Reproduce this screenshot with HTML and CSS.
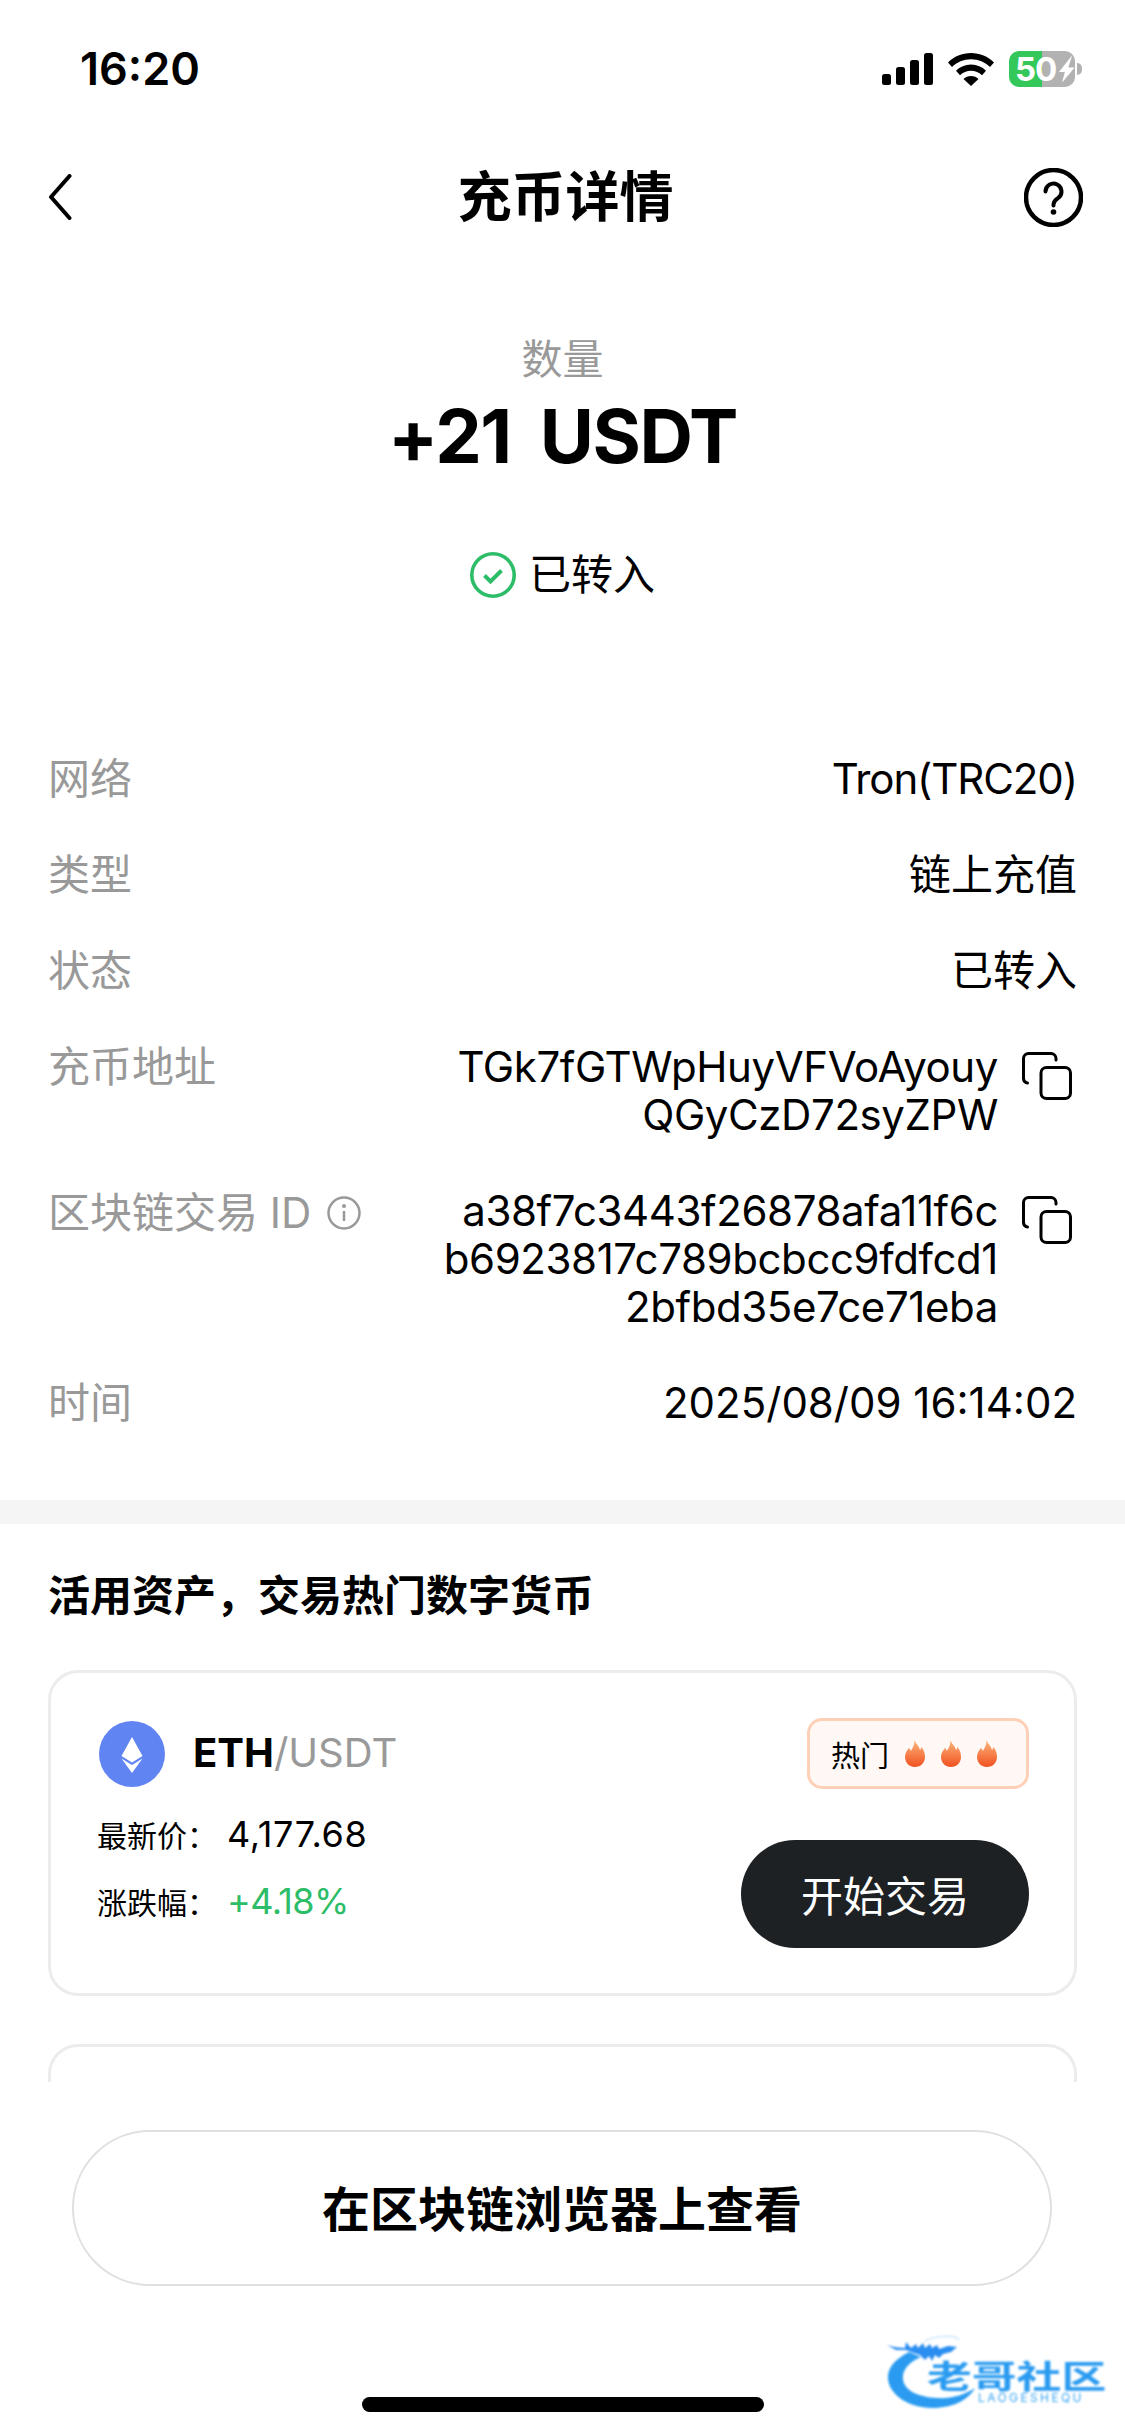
FILE: index.html
```html
<!DOCTYPE html>
<html lang="zh-CN">
<head>
    <meta charset="UTF-8">
    <meta name="viewport" content="width=device-width, initial-scale=1.0">
    <title>充币详情</title>
    <link rel="stylesheet" href="styles.css">
</head>
<body>
<svg class="defs" width="0" height="0">
    <defs>
        <linearGradient id="flameFill" x1="0" y1="0" x2="0" y2="1">
            <stop offset="0" stop-color="#fdb57c"/>
            <stop offset="1" stop-color="#f0511f"/>
        </linearGradient>
        <symbol id="flame" viewBox="0 0 20 27">
            <path d="M9.500 0C10.500 4 14 5.500 15 10c.8-.8 1.200-1.800 1.300-3C18.700 9.500 20 13 20 17c0 6-4.500 10-10 10S0 23 0 17c0-4 2-6.500 4-9 1 1 1.500 1.800 1.800 3C7.800 8 9.800 4.500 9.500 0z" fill="url(#flameFill)"/>
        </symbol>
        <symbol id="copy" viewBox="0 0 50 48">
            <path d="M34 8V6.500A5 5 0 0 0 29 1.500H6.500a5 5 0 0 0-5 5V26a5 5 0 0 0 4 5" fill="none" stroke="#000" stroke-width="3" stroke-linecap="round"/>
            <rect x="19" y="15.500" width="29.500" height="31" rx="5.500" fill="none" stroke="#000" stroke-width="3"/>
        </symbol>
    </defs>
</svg>

<div class="page">
    <div class="scroll">
        <div class="statusbar">
            <span class="time">16:20</span>
            <div class="status-icons">
                <svg width="51" height="32" viewBox="0 0 51 32">
                    <rect x="0" y="21" width="9" height="11" rx="2.500"/>
                    <rect x="14" y="14" width="9" height="18" rx="2.500"/>
                    <rect x="28" y="7" width="9" height="25" rx="2.500"/>
                    <rect x="42" y="0" width="9" height="32" rx="2.500"/>
                </svg>
                <svg width="46" height="33" viewBox="0 0 46 33">
                    <path d="M23 0C14 0 6 3.500 0 9.500l4 4.500C9 9 15.500 6.200 23 6.200S37 9 42 14l4-4.500C40 3.500 32 0 23 0z"/>
                    <path d="M23 11.500c-6 0-11 2.300-15 6.200l4 4.500c3-2.800 6.800-4.500 11-4.500s8 1.700 11 4.500l4-4.500c-4-3.900-9-6.200-15-6.200z"/>
                    <path d="M23 23c-3 0-5.500 1.100-7.500 3L23 33l7.500-7c-2-1.900-4.500-3-7.500-3z"/>
                </svg>
                <div class="battery">
                    <span class="battery-num">50</span>
                    <svg width="16" height="28" viewBox="0 0 16 28">
                        <path d="M13.500 0L0 17h6L3 28l13-15.500H9.500z" fill="#fff"/>
                    </svg>
                </div>
            </div>
        </div>

        <div class="nav">
            <svg class="nav-back" width="24" height="46" viewBox="0 0 24 46">
                <path d="M21.500 2L3 23l18.500 21" fill="none" stroke="#000" stroke-width="4" stroke-linecap="round" stroke-linejoin="round"/>
            </svg>
            <h1 class="nav-title">充币详情</h1>
            <svg class="nav-help" width="59" height="59" viewBox="0 0 59 59">
                <circle cx="29.500" cy="29.500" r="27.500" fill="none" stroke="#000" stroke-width="4.500"/>
                <path d="M21.500 23.500a8 8 0 1 1 12.500 6.600c-2.800 1.900-4.500 3.400-4.500 6.400v1" fill="none" stroke="#000" stroke-width="4" stroke-linecap="round"/>
                <circle cx="29.500" cy="44" r="2.800"/>
            </svg>
        </div>

        <div class="summary">
            <div class="summary-label">数量</div>
            <div class="summary-amount">+21 USDT</div>
            <div class="summary-status">
                <svg width="46" height="46" viewBox="0 0 46 46">
                    <circle cx="23" cy="23" r="21.200" fill="none" stroke="#2dbd68" stroke-width="3.600"/>
                    <path d="M14.500 23.500l6 6 11-11" fill="none" stroke="#2dbd68" stroke-width="4"/>
                </svg>
                <span>已转入</span>
            </div>
        </div>

        <div class="details">
            <div class="row">
                <div class="row-label">网络</div>
                <div class="row-value tight">Tron(TRC20)</div>
            </div>
            <div class="row">
                <div class="row-label">类型</div>
                <div class="row-value">链上充值</div>
            </div>
            <div class="row">
                <div class="row-label">状态</div>
                <div class="row-value">已转入</div>
            </div>
            <div class="row">
                <div class="row-label">充币地址</div>
                <div class="row-value with-copy">
                    <span>TGk7fGTWpHuyVFVoAyouy<br>QGyCzD72syZPW</span>
                    <svg class="copy-icon" width="50" height="48"><use href="#copy"/></svg>
                </div>
            </div>
            <div class="row">
                <div class="row-label row-label-id">区块链交易 ID
                    <svg class="info-icon" width="34" height="34" viewBox="0 0 34 34">
                        <circle cx="17" cy="17" r="15.500" fill="none" stroke="#999" stroke-width="2.500"/>
                        <circle cx="17" cy="10" r="2" fill="#999"/>
                        <path d="M17 15v10" stroke="#999" stroke-width="2.500"/>
                    </svg>
                </div>
                <div class="row-value with-copy">
                    <span>a38f7c3443f26878afa11f6c<br>b6923817c789bcbcc9fdfcd1<br>2bfbd35e7ce71eba</span>
                    <svg class="copy-icon" width="50" height="48"><use href="#copy"/></svg>
                </div>
            </div>
            <div class="row">
                <div class="row-label">时间</div>
                <div class="row-value">2025/08/09 16:14:02</div>
            </div>
        </div>

        <div class="band"></div>

        <div class="promo">
            <h2 class="promo-title">活用资产，交易热门数字货币</h2>

            <div class="card">
                <div class="card-left">
                    <div class="pair">
                        <svg width="66" height="66" viewBox="0 0 66 66">
                            <circle cx="33" cy="33" r="33" fill="#6184f3"/>
                            <path d="M33 16L22.500 35 33 41.500 43.500 35z" fill="#fff"/>
                            <path d="M22.500 37.500L33 44l10.500-6.500L33 52z" fill="#fff"/>
                        </svg>
                        <span class="pair-name"><b>ETH</b>/USDT</span>
                    </div>
                    <div class="stat stat-first">
                        <span class="stat-label">最新价：</span>
                        <span class="stat-value">4,177.68</span>
                    </div>
                    <div class="stat">
                        <span class="stat-label">涨跌幅：</span>
                        <span class="stat-value up">+4.18%</span>
                    </div>
                </div>
                <div class="card-right">
                    <div class="hot-tag">
                        <span>热门</span>
                        <svg width="20" height="27"><use href="#flame"/></svg>
                        <svg width="20" height="27"><use href="#flame"/></svg>
                        <svg width="20" height="27"><use href="#flame"/></svg>
                    </div>
                    <div class="trade-btn">开始交易</div>
                </div>
            </div>

            <div class="card"></div>
        </div>
    </div>

    <div class="footer">
        <div class="explorer-btn">在区块链浏览器上查看</div>
        <div class="home-bar"></div>
    </div>

    <div class="watermark">
        <svg class="watermark-dragon" width="120" height="75" viewBox="0 0 120 75">
            <path d="M22 17C8 24 0 33 1 44c1 15 20 29 44 29 18 0 35-6 43-20-11 7-24 11-38 10C32 62 17 56 16 44c-1-9 6-17 18-22z" fill="#2a9bf0"/>
            <path d="M0 10c6 2 12 3 18 3l1-6 5 6 5-4 2 4 5-5 2 5 5-4 2 4 5-3 2 4 9-3 9 1-6 5-8 2-4 4-4-3-3 6-3-5-4 4-5-5-6-2-8-3-10 0z" fill="#2a8df0"/>
            <path d="M38 6C50 0 68 0 72 5" fill="none" stroke="#d6eafb" stroke-width="2"/>
        </svg>
        <span class="watermark-name">老哥社区</span>
        <span class="watermark-sub">LAOGESHEQU</span>
    </div>
</div>
</body>
</html>
```

FILE: styles.css
```css
* {
  box-sizing: border-box;
}

html,
body {
  margin: 0;
  padding: 0;
  background-color: #fff;
}

body {
  font-family: Inter, "Noto Sans CJK SC", sans-serif;
  color: #000;
}

.defs {
  position: absolute;
}

.page {
  position: relative;
  display: flex;
  flex-direction: column;
  width: 1125px;
  height: 2436px;
  overflow: hidden;
}

.scroll {
  height: 2082px;
  overflow: hidden;
}

/* status bar */
.statusbar {
  display: flex;
  justify-content: space-between;
  align-items: center;
  height: 139px;
  padding: 0 50px 1px 80px;
}

.time {
  font-size: 45px;
  font-weight: 600;
  line-height: 46px;
}

.status-icons {
  display: flex;
  align-items: center;
  gap: 15px;
}

.battery {
  position: relative;
  display: flex;
  align-items: center;
  gap: 3px;
  width: 66px;
  height: 36px;
  padding-left: 6px;
  border-radius: 10px;
  background: linear-gradient(90deg, #34c759 50%, #b2b2b2 50%);
}

.battery::after {
  content: "";
  position: absolute;
  left: 68px;
  top: 12px;
  width: 5px;
  height: 12px;
  border-radius: 0 6px 6px 0;
  background-color: #b2b2b2;
}

.battery-num {
  font-size: 33px;
  font-weight: 700;
  line-height: 36px;
  letter-spacing: -1px;
  color: #fff;
}

/* nav */
.nav {
  display: grid;
  grid-template-columns: 1fr auto 1fr;
  align-items: center;
  height: 116px;
  padding: 0 42px 0 48px;
}

.nav-title {
  margin: 0;
  padding-bottom: 8px;
  font-size: 54px;
  font-weight: 700;
}

.nav-help {
  justify-self: end;
}

/* summary */
.summary {
  display: flex;
  flex-direction: column;
  align-items: center;
  padding-top: 76px;
}

.summary-label {
  font-size: 41px;
  line-height: 56px;
  color: #999;
}

.summary-amount {
  margin-top: 4px;
  font-size: 74px;
  font-weight: 700;
  line-height: 90px;
  letter-spacing: -1.5px;
  word-spacing: 13px;
}

.summary-status {
  display: flex;
  align-items: center;
  gap: 13px;
  margin-top: 70px;
  font-size: 42px;
  line-height: 48px;
}

/* detail rows */
.details {
  display: flex;
  flex-direction: column;
  gap: 48px;
  padding: 156px 48px 73px;
}

.row {
  display: flex;
  justify-content: space-between;
  font-size: 42px;
  line-height: 48px;
}

.row-label {
  display: flex;
  align-items: center;
  gap: 16px;
  height: 48px;
  color: #999;
}

.row-label-id {
  padding-top: 4px;
}

.row-value {
  text-align: right;
}

.tight {
  letter-spacing: -1.1px;
}

.with-copy {
  display: flex;
  gap: 24px;
  letter-spacing: -0.4px;
}

.copy-icon {
  margin: 9px 5px 0 0;
}

.band {
  height: 24px;
  background-color: #f5f5f5;
}

/* promo */
.promo {
  padding: 44px 48px 0;
}

.promo-title {
  margin: 0 0 46px;
  font-size: 42px;
  font-weight: 700;
  line-height: 56px;
}

.card {
  display: flex;
  justify-content: space-between;
  height: 326px;
  margin-bottom: 48px;
  padding: 45px 45px 45px 46px;
  border: 3px solid #ececec;
  border-radius: 30px;
}

.pair {
  display: flex;
  align-items: center;
  gap: 28px;
  margin: 3px 0 0 2px;
}

.pair-name {
  padding-bottom: 4px;
  font-size: 40px;
  color: #999;
}

.pair-name b {
  color: #000;
}

.stat {
  display: flex;
  align-items: center;
  height: 44px;
  margin-top: 23px;
}

.stat-first {
  margin-top: 25px;
}

.stat-label {
  width: 130px;
  font-size: 30px;
}

.stat-value {
  font-size: 36px;
  letter-spacing: 0.7px;
}

.up {
  color: #2dbd68;
  letter-spacing: -0.6px;
}

.card-right {
  display: flex;
  flex-direction: column;
  justify-content: space-between;
  align-items: flex-end;
}

.hot-tag {
  display: flex;
  align-items: center;
  gap: 16px;
  width: 222px;
  height: 71px;
  padding-left: 21px;
  border: 3px solid #ffd0b8;
  border-radius: 15px;
  background-color: #fff8f5;
  font-size: 29px;
}

.trade-btn {
  display: flex;
  justify-content: center;
  align-items: center;
  width: 288px;
  height: 108px;
  padding-bottom: 2px;
  border-radius: 54px;
  background-color: #1e2124;
  color: #fff;
  font-size: 42px;
}

/* footer */
.footer {
  display: flex;
  flex-direction: column;
  align-items: center;
  padding-top: 48px;
}

.explorer-btn {
  display: flex;
  justify-content: center;
  align-items: center;
  width: 980px;
  height: 156px;
  margin-right: 1px;
  padding: 0 0 5px;
  border: 2px solid #e0e0e0;
  border-radius: 78px;
  font-size: 48px;
  font-weight: 700;
}

.home-bar {
  width: 402px;
  height: 15px;
  margin-top: 111px;
  border-radius: 8px;
  background-color: #000;
}

/* watermark */
.watermark {
  position: absolute;
  left: 887px;
  top: 2335px;
  width: 225px;
  height: 75px;
  filter: blur(0.8px);
}

.watermark-dragon {
  position: absolute;
  left: 0;
  top: 0;
}

.watermark-name {
  position: absolute;
  left: 40px;
  top: 27px;
  font-size: 32px;
  font-weight: 700;
  line-height: 30px;
  white-space: nowrap;
  color: #2a9bf0;
  transform: scaleX(1.4);
  transform-origin: left top;
}

.watermark-sub {
  position: absolute;
  left: 91px;
  top: 57px;
  font-size: 12px;
  line-height: 12px;
  letter-spacing: 2.4px;
  color: #3aa6f2;
}
```
